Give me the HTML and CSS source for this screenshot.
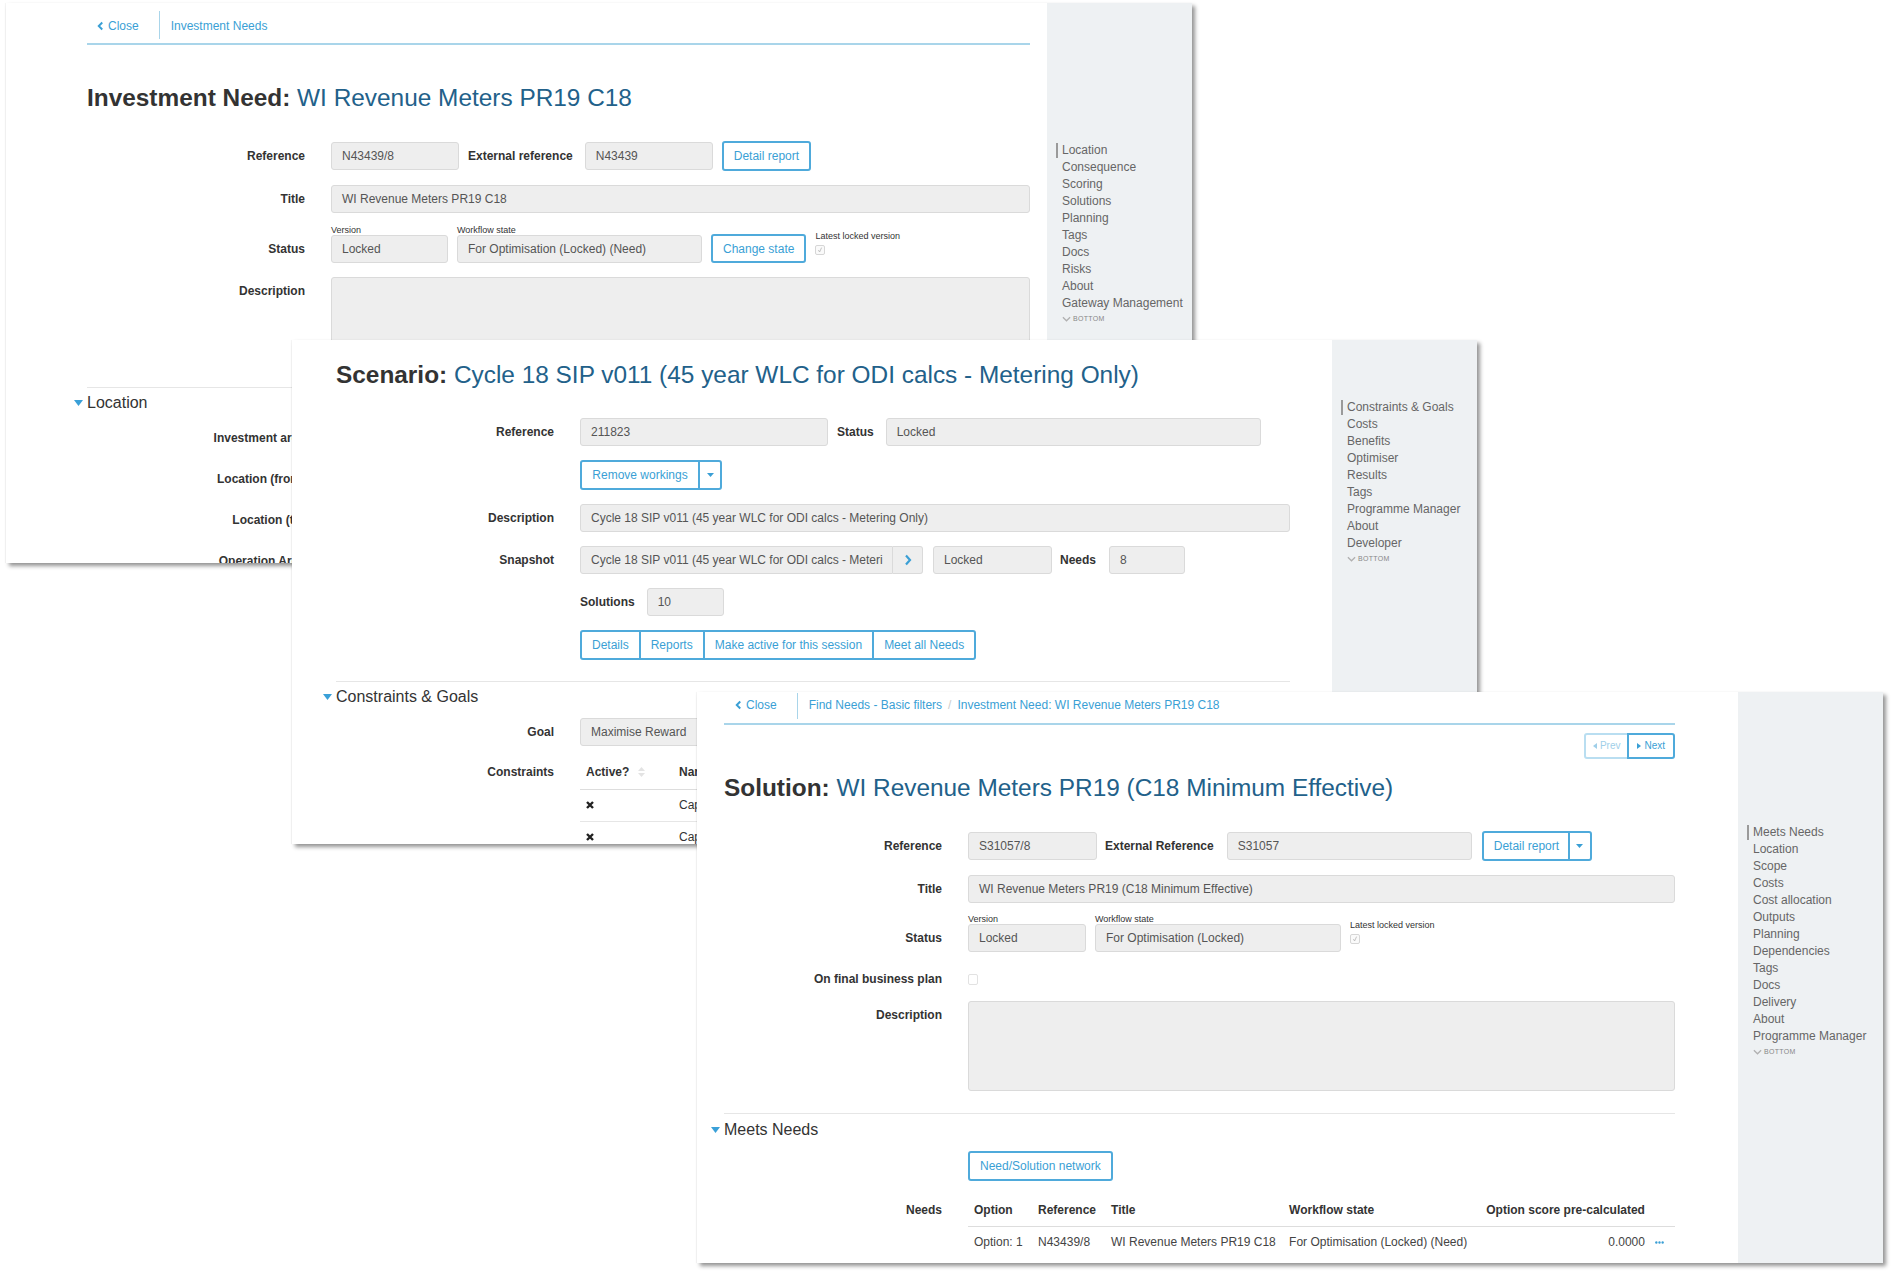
FILE: index.html
```html
<!DOCTYPE html>
<html lang="en">
  <head>
    <meta charset="UTF-8" />
    <title>Investment Need / Scenario / Solution</title>
    <link rel="stylesheet" href="styles.css">
  </head>
  <body>
    <!-- Ventana 1: Investment Need -->
    <div class="window win-need">
      <main class="page">
        <nav class="crumbs">
          <a class="crumb-close"><svg class="chev" viewBox="0 0 8 10"><polyline points="6,1 2,5 6,9" /></svg>Close</a>
          <span class="crumb-sep"></span>
          <a>Investment Needs</a>
        </nav>

        <h1 class="page-title need-title"><b>Investment Need:</b> WI Revenue Meters PR19 C18</h1>

        <div class="form-row">
          <span class="row-label">Reference</span>
          <div class="fields">
            <div class="field w128">N43439/8</div>
            <span class="inline-label">External reference</span>
            <div class="field w128">N43439</div>
            <button class="btn">Detail report</button>
          </div>
        </div>

        <div class="form-row">
          <span class="row-label">Title</span>
          <div class="fields"><div class="field grow">WI Revenue Meters PR19 C18</div></div>
        </div>

        <div class="form-row status-row">
          <span class="row-label">Status</span>
          <div class="fields">
            <div class="sub"><span class="sub-label">Version</span><div class="field w117">Locked</div></div>
            <div class="sub"><span class="sub-label">Workflow state</span><div class="field w245">For Optimisation (Locked) (Need)</div></div>
            <button class="btn">Change state</button>
            <div class="latest">
              <span class="sub-label">Latest locked version</span>
              <span class="check"><svg viewBox="0 0 10 10"><polyline points="3,5 4.5,7.5 7,2" /></svg></span>
            </div>
          </div>
        </div>

        <div class="form-row top">
          <span class="row-label">Description</span>
          <div class="fields"><div class="field grow need-area"></div></div>
        </div>

        <section class="section">
          <h2 class="section-head"><svg class="tri" viewBox="0 0 9 6"><polygon points="0,0 9,0 4.5,6" /></svg>Location</h2>
          <div class="form-row loc-row"><span class="row-label">Investment area</span></div>
          <div class="form-row loc-row"><span class="row-label">Location (from)</span></div>
          <div class="form-row loc-row"><span class="row-label">Location (to)</span></div>
          <div class="form-row loc-row"><span class="row-label">Operation Area</span></div>
        </section>
      </main>

      <aside class="side need-side">
        <ul class="side-nav">
          <li class="active">Location</li>
          <li>Consequence</li>
          <li>Scoring</li>
          <li>Solutions</li>
          <li>Planning</li>
          <li>Tags</li>
          <li>Docs</li>
          <li>Risks</li>
          <li>About</li>
          <li>Gateway Management</li>
          <li class="side-bottom"><svg viewBox="0 0 10 6"><polyline points="1,1 5,5 9,1" /></svg>BOTTOM</li>
        </ul>
      </aside>
    </div>

    <!-- Ventana 2: Scenario -->
    <div class="window win-scenario">
      <main class="page">
        <h1 class="page-title"><b>Scenario:</b> Cycle 18 SIP v011 (45 year WLC for ODI calcs - Metering Only)</h1>

        <div class="form-row">
          <span class="row-label">Reference</span>
          <div class="fields">
            <div class="field w248">211823</div>
            <span class="inline-label">Status</span>
            <div class="field w375">Locked</div>
          </div>
        </div>

        <div class="form-row">
          <span class="row-label"></span>
          <div class="fields">
            <div class="btn-group">
              <button class="btn w120">Remove workings</button>
              <button class="btn caret-btn"><svg class="caret" viewBox="0 0 7 4"><polygon points="0,0 7,0 3.5,4" /></svg></button>
            </div>
          </div>
        </div>

        <div class="form-row">
          <span class="row-label">Description</span>
          <div class="fields"><div class="field grow">Cycle 18 SIP v011 (45 year WLC for ODI calcs - Metering Only)</div></div>
        </div>

        <div class="form-row">
          <span class="row-label">Snapshot</span>
          <div class="fields">
            <div class="input-group">
              <div class="field w313">Cycle 18 SIP v011 (45 year WLC for ODI calcs - Meteri</div>
              <span class="addon"><svg class="chev-r" viewBox="0 0 8 12"><polyline points="2,1.5 6,6 2,10.5" /></svg></span>
            </div>
            <div class="field w119 gap-l">Locked</div>
            <span class="inline-label needs-label">Needs</span>
            <div class="field w76">8</div>
          </div>
        </div>

        <div class="form-row">
          <span class="row-label"></span>
          <div class="fields">
            <span class="inline-label first">Solutions</span>
            <div class="field w77">10</div>
          </div>
        </div>

        <div class="form-row">
          <span class="row-label"></span>
          <div class="fields">
            <div class="btn-group">
              <button class="btn">Details</button>
              <button class="btn">Reports</button>
              <button class="btn">Make active for this session</button>
              <button class="btn">Meet all Needs</button>
            </div>
          </div>
        </div>

        <section class="section scen-section">
          <h2 class="section-head"><svg class="tri" viewBox="0 0 9 6"><polygon points="0,0 9,0 4.5,6" /></svg>Constraints &amp; Goals</h2>
          <div class="form-row goal-row">
            <span class="row-label">Goal</span>
            <div class="fields"><div class="field w250">Maximise Reward</div></div>
          </div>
          <div class="form-row top">
            <span class="row-label table-label">Constraints</span>
            <div class="fields">
              <table class="grid constraints">
                <thead>
                  <tr>
                    <th class="col-active">Active?<svg class="sort" viewBox="0 0 7 12"><polygon points="0,5 7,5 3.5,1" /><polygon points="0,7 7,7 3.5,11" /></svg></th>
                    <th>Name</th>
                  </tr>
                </thead>
                <tbody>
                  <tr><td><svg class="cross" viewBox="0 0 8 8"><path d="M1,1 L7,7 M7,1 L1,7" /></svg></td><td>Capex limit</td></tr>
                  <tr><td><svg class="cross" viewBox="0 0 8 8"><path d="M1,1 L7,7 M7,1 L1,7" /></svg></td><td>Capex limit</td></tr>
                </tbody>
              </table>
            </div>
          </div>
        </section>
      </main>

      <aside class="side scen-side">
        <ul class="side-nav">
          <li class="active">Constraints &amp; Goals</li>
          <li>Costs</li>
          <li>Benefits</li>
          <li>Optimiser</li>
          <li>Results</li>
          <li>Tags</li>
          <li>Programme Manager</li>
          <li>About</li>
          <li>Developer</li>
          <li class="side-bottom"><svg viewBox="0 0 10 6"><polyline points="1,1 5,5 9,1" /></svg>BOTTOM</li>
        </ul>
      </aside>
    </div>

    <!-- Ventana 3: Solution -->
    <div class="window win-solution">
      <main class="page">
        <nav class="crumbs sol-crumbs">
          <a class="crumb-close"><svg class="chev" viewBox="0 0 8 10"><polyline points="6,1 2,5 6,9" /></svg>Close</a>
          <span class="crumb-sep"></span>
          <a>Find Needs - Basic filters</a>
          <span class="crumb-slash">/</span>
          <a>Investment Need: WI Revenue Meters PR19 C18</a>
        </nav>

        <div class="pager">
          <button class="btn btn-sm off"><svg class="pg" viewBox="0 0 4 6"><polygon points="4,0 4,6 0,3" /></svg>Prev</button>
          <button class="btn btn-sm"><svg class="pg" viewBox="0 0 4 6"><polygon points="0,0 0,6 4,3" /></svg>Next</button>
        </div>

        <h1 class="page-title sol-title"><b>Solution:</b> WI Revenue Meters PR19 (C18 Minimum Effective)</h1>

        <div class="form-row">
          <span class="row-label">Reference</span>
          <div class="fields">
            <div class="field w129">S31057/8</div>
            <span class="inline-label ext-ref">External Reference</span>
            <div class="field w245">S31057</div>
            <div class="btn-group gap-l">
              <button class="btn w88">Detail report</button>
              <button class="btn caret-btn"><svg class="caret" viewBox="0 0 7 4"><polygon points="0,0 7,0 3.5,4" /></svg></button>
            </div>
          </div>
        </div>

        <div class="form-row">
          <span class="row-label">Title</span>
          <div class="fields"><div class="field grow">WI Revenue Meters PR19 (C18 Minimum Effective)</div></div>
        </div>

        <div class="form-row status-row sol-status">
          <span class="row-label">Status</span>
          <div class="fields">
            <div class="sub"><span class="sub-label">Version</span><div class="field w118">Locked</div></div>
            <div class="sub"><span class="sub-label">Workflow state</span><div class="field w246">For Optimisation (Locked)</div></div>
            <div class="latest">
              <span class="sub-label">Latest locked version</span>
              <span class="check"><svg viewBox="0 0 10 10"><polyline points="3,5 4.5,7.5 7,2" /></svg></span>
            </div>
          </div>
        </div>

        <div class="form-row plan-row">
          <span class="row-label">On final business plan</span>
          <div class="fields"><span class="check empty"></span></div>
        </div>

        <div class="form-row top">
          <span class="row-label">Description</span>
          <div class="fields"><div class="field grow sol-area"></div></div>
        </div>

        <section class="section sol-section">
          <h2 class="section-head"><svg class="tri" viewBox="0 0 9 6"><polygon points="0,0 9,0 4.5,6" /></svg>Meets Needs</h2>
          <div class="form-row">
            <span class="row-label"></span>
            <div class="fields"><button class="btn">Need/Solution network</button></div>
          </div>
          <div class="form-row top">
            <span class="row-label needs-table-label">Needs</span>
            <div class="fields">
              <table class="grid needs">
                <thead>
                  <tr>
                    <th class="c-opt">Option</th>
                    <th class="c-ref">Reference</th>
                    <th class="c-title">Title</th>
                    <th class="c-wf">Workflow state</th>
                    <th class="c-score">Option score pre-calculated</th>
                    <th class="c-more"></th>
                  </tr>
                </thead>
                <tbody>
                  <tr>
                    <td>Option: 1</td>
                    <td>N43439/8</td>
                    <td>WI Revenue Meters PR19 C18</td>
                    <td>For Optimisation (Locked) (Need)</td>
                    <td class="c-score">0.0000</td>
                    <td class="c-more"><svg class="dots" viewBox="0 0 10 3"><circle cx="1.5" cy="1.5" r="1.3" /><circle cx="5" cy="1.5" r="1.3" /><circle cx="8.5" cy="1.5" r="1.3" /></svg></td>
                  </tr>
                </tbody>
              </table>
            </div>
          </div>
        </section>
      </main>

      <aside class="side sol-side">
        <ul class="side-nav">
          <li class="active">Meets Needs</li>
          <li>Location</li>
          <li>Scope</li>
          <li>Costs</li>
          <li>Cost allocation</li>
          <li>Outputs</li>
          <li>Planning</li>
          <li>Dependencies</li>
          <li>Tags</li>
          <li>Docs</li>
          <li>Delivery</li>
          <li>About</li>
          <li>Programme Manager</li>
          <li class="side-bottom"><svg viewBox="0 0 10 6"><polyline points="1,1 5,5 9,1" /></svg>BOTTOM</li>
        </ul>
      </aside>
    </div>
  </body>
</html>
```

FILE: styles.css
```css
* {
  margin: 0;
  padding: 0;
  box-sizing: border-box;
}

body {
  font-family: "Liberation Sans", Arial, sans-serif;
  font-size: 12px;
  color: #333;
  background-color: #ffffff;
  width: 1895px;
  height: 1277px;
  overflow: hidden;
  position: relative;
}

/* Ventanas superpuestas */
.window {
  position: absolute;
  display: flex;
  background-color: #ffffff;
  overflow: hidden;
  box-shadow: 3px 3px 4px rgba(0, 0, 0, 0.42), -1px 0 1px rgba(0, 0, 0, 0.04);
}

.win-need {
  left: 6px;
  top: 3px;
  width: 1186px;
  height: 560px;
}

.win-scenario {
  left: 292px;
  top: 340px;
  width: 1185px;
  height: 504px;
}

.win-solution {
  left: 697px;
  top: 692px;
  width: 1186px;
  height: 571px;
}

.page {
  flex: 1;
  min-width: 0;
}

.win-need .page {
  padding: 8px 17px 0 81px;
}

.win-scenario .page {
  padding: 20px 42px 0 44px;
}

.win-solution .page {
  padding: 1px 63px 0 27px;
}

/* Barra lateral */
.side {
  width: 145px;
  flex: none;
  background-color: #eef1f3;
}

.side-nav {
  list-style: none;
  padding-left: 15px;
  color: #666;
  line-height: 17px;
}

.need-side .side-nav {
  padding-top: 139px;
}

.scen-side .side-nav {
  padding-top: 59px;
}

.sol-side .side-nav {
  padding-top: 132px;
}

.side-nav li {
  white-space: nowrap;
}

.side-nav li.active {
  border-left: 2px solid #9a9a9a;
  margin-left: -6px;
  padding-left: 4px;
  line-height: 15px;
  margin-top: 1px;
  margin-bottom: 1px;
}

.side-nav .side-bottom {
  font-size: 7px;
  color: #888;
  letter-spacing: 0.3px;
  line-height: 12px;
  display: flex;
  align-items: center;
  gap: 2px;
  margin-top: 1px;
}

.side-bottom svg {
  width: 9px;
  height: 6px;
  fill: none;
  stroke: #b0b0b0;
  stroke-width: 1.4;
}

/* Migas de pan */
.crumbs {
  display: flex;
  height: 34px;
  padding-left: 10px;
  border-bottom: 2px solid #a9d5ea;
}

.crumbs a {
  color: #3a9fd5;
  line-height: 14px;
  padding-top: 8px;
  white-space: nowrap;
}

.crumb-close {
  display: flex;
  align-items: flex-start;
}

.chev {
  width: 7px;
  height: 10px;
  margin: 2px 4px 0 0;
  fill: none;
  stroke: #3a9fd5;
  stroke-width: 2.2;
}

.crumb-sep {
  width: 1px;
  background-color: #a9d5ea;
  margin: 0 11px 4px 20px;
}

.crumb-slash {
  color: #ccc;
  line-height: 14px;
  padding: 8px 6px 0;
}

.sol-crumbs {
  height: 32px;
  padding-left: 11px;
}

.sol-crumbs a,
.sol-crumbs .crumb-slash {
  padding-top: 5px;
}

/* Titulos */
.page-title {
  font-size: 24.4px;
  line-height: 30px;
  font-weight: normal;
  color: #22618a;
  margin-bottom: 28px;
  white-space: nowrap;
}

.page-title b {
  color: #333;
}

.need-title {
  margin-top: 38px;
}

.sol-title {
  margin-top: 14px;
  margin-bottom: 28px;
}

/* Formularios */
.form-row {
  display: flex;
  align-items: center;
  margin-bottom: 14px;
}

.form-row.top {
  align-items: flex-start;
}

.row-label {
  flex: none;
  width: 244px;
  padding-right: 26px;
  text-align: right;
  font-weight: bold;
  line-height: 28px;
  white-space: nowrap;
}

.fields {
  flex: 1;
  display: flex;
  align-items: center;
  min-width: 0;
}

.field {
  flex: none;
  height: 28px;
  line-height: 26px;
  padding: 0 10px;
  background-color: #eeeeee;
  border: 1px solid #dadada;
  border-radius: 3px;
  color: #555;
  white-space: nowrap;
  overflow: hidden;
}

.field.grow {
  flex: 1;
}

.w76 { width: 76px; }
.w77 { width: 77px; }
.w88 { width: 88px; }
.w117 { width: 117px; }
.w118 { width: 118px; }
.w119 { width: 119px; }
.w120 { width: 120px; }
.w128 { width: 128px; }
.w129 { width: 129px; }
.w245 { width: 245px; }
.w246 { width: 246px; }
.w248 { width: 248px; }
.w250 { width: 250px; }
.w313 { width: 313px; }
.w375 { width: 375px; }

.inline-label {
  font-weight: bold;
  margin: 0 12px 0 9px;
  white-space: nowrap;
}

.inline-label.first {
  margin-left: 0;
}

.needs-label {
  margin: 0 13px 0 8px;
}

.ext-ref {
  margin: 0 13px 0 8px;
}

.gap-l {
  margin-left: 10px;
}

.fields > .btn {
  margin-left: 9px;
}

.form-row .fields > .btn:first-child {
  margin-left: 0;
}

/* Fila de estado con etiquetas pequeñas */
.status-row {
  align-items: flex-end;
  margin-top: -2px;
}

.status-row .fields {
  align-items: flex-end;
  gap: 9px;
}

.status-row .fields > .btn {
  margin-left: 0;
  height: 29px;
}

.sub {
  display: flex;
  flex-direction: column;
}

.sub-label {
  font-size: 9px;
  line-height: 10px;
  color: #333;
  white-space: nowrap;
}

.latest {
  display: flex;
  flex-direction: column;
  height: 33px;
}

.latest .sub-label {
  line-height: 12px;
}

.check {
  display: block;
  width: 10px;
  height: 10px;
  margin-top: 3px;
  border: 1px solid #d6d6d6;
  border-radius: 2px;
  background-color: #fafafa;
}

.check svg {
  display: block;
  width: 8px;
  height: 8px;
  fill: none;
  stroke: #b5b5b5;
  stroke-width: 1;
}

.check.empty {
  width: 10px;
  height: 11px;
  margin-top: 0;
  border-color: #e2e2e2;
  background-color: #fff;
}

.sol-status {
  margin-top: -3px;
  margin-bottom: 13px;
}

.plan-row {
  margin-bottom: 8px;
}

.need-area {
  height: 93px;
}

.sol-area {
  height: 90px;
}

/* Botones */
.btn {
  flex: none;
  height: 30px;
  padding: 0 10px;
  font: inherit;
  line-height: 26px;
  color: #3a9fd5;
  background-color: #ffffff;
  border: 2px solid #4faadb;
  border-radius: 3px;
  white-space: nowrap;
  cursor: pointer;
}

.btn-group {
  display: flex;
}

.btn-group .btn {
  border-radius: 0;
}

.btn-group .btn:first-child {
  border-radius: 3px 0 0 3px;
}

.btn-group .btn:last-child {
  border-radius: 0 3px 3px 0;
}

.btn-group .btn + .btn {
  margin-left: -2px;
}

.caret-btn {
  width: 24px;
  padding: 0;
  display: flex;
  align-items: center;
  justify-content: center;
}

.caret {
  width: 7px;
  height: 4px;
  fill: #3a9fd5;
}

.input-group {
  display: flex;
}

.input-group .field {
  border-radius: 3px 0 0 3px;
}

.addon {
  width: 30px;
  height: 28px;
  display: flex;
  align-items: center;
  justify-content: center;
  background-color: #eeeeee;
  border: 1px solid #dadada;
  border-left: none;
  border-radius: 0 3px 3px 0;
}

.chev-r {
  width: 8px;
  height: 12px;
  fill: none;
  stroke: #3a9fd5;
  stroke-width: 2.2;
}

.pager {
  display: flex;
  justify-content: flex-end;
  margin-top: 8px;
}

.btn-sm {
  height: 26px;
  line-height: 22px;
  font-size: 10px;
  padding: 0 7px;
  display: flex;
  align-items: center;
  gap: 3px;
  border-width: 2px;
}

.btn-sm:first-child {
  border-radius: 3px 0 0 3px;
}

.btn-sm:last-child {
  border-radius: 0 3px 3px 0;
  margin-left: -2px;
  padding: 0 8px;
}

.btn-sm.off {
  color: #9fcfe9;
  border-color: #b9def1;
}

.pg {
  width: 4px;
  height: 6px;
  fill: currentColor;
}

/* Secciones */
.section {
  border-top: 1px solid #e6e6e6;
  margin-top: 17px;
}

.section-head {
  display: flex;
  align-items: center;
  gap: 4px;
  margin: 5px 0 11px -13px;
  font-size: 16px;
  line-height: 20px;
  font-weight: normal;
  color: #333;
}

.tri {
  width: 9px;
  height: 6px;
  fill: #3aa0d8;
}

.loc-row {
  margin-bottom: 13px;
}

.loc-row .row-label {
  line-height: 28px;
}

.scen-section {
  margin-top: 21px;
}

.goal-row {
  margin-bottom: 10px;
}

.sol-section {
  margin-top: 22px;
}

.sol-section .section-head {
  margin-top: 6px;
}

.table-label {
  line-height: 33px;
}

.needs-table-label {
  line-height: 31px;
}

/* Tablas */
.grid {
  border-collapse: collapse;
  white-space: nowrap;
}

.grid th {
  text-align: left;
  font-weight: bold;
  padding: 0 6px;
  height: 33px;
  border-bottom: 1px solid #dddddd;
}

.grid td {
  padding: 0 6px;
  height: 32px;
  color: #333;
  border-bottom: 1px solid #e6e6e6;
}

.constraints {
  width: 500px;
}

.constraints th.col-active {
  width: 93px;
}

.sort {
  width: 7px;
  height: 12px;
  margin-left: 9px;
  vertical-align: -2px;
  fill: #e3e3e3;
}

.cross {
  display: block;
  width: 8px;
  height: 8px;
  stroke: #222;
  stroke-width: 2.4;
}

.needs {
  width: 100%;
}

.needs th {
  height: 31px;
}

.needs td {
  height: 32px;
  border-bottom: none;
  color: #444;
}

.needs .c-opt { width: 64px; }
.needs .c-ref { width: 73px; }
.needs .c-title { width: 178px; }
.needs .c-wf { width: 197px; }
.needs .c-score { width: 170px; text-align: right; }
.needs .c-more { width: 24px; padding: 0 4px; }

.dots {
  display: block;
  width: 9px;
  height: 3px;
  fill: #3a9fd5;
}
```
